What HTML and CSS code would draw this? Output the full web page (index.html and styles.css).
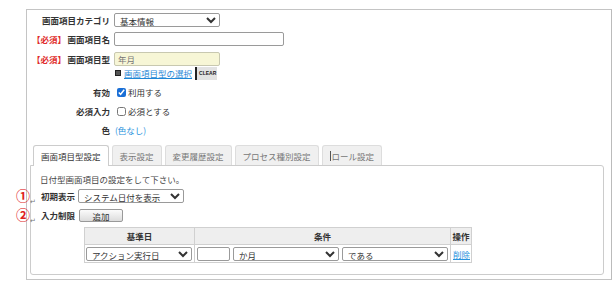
FILE: index.html
```html
<!DOCTYPE html>
<html lang="ja">
<head>
  <meta charset="UTF-8" />
  <title>画面項目設定</title>
  <link rel="stylesheet" href="styles.css">
</head>
<body>

<div class="frame">
  <div class="row r1">
    <span class="lbl">画面項目カテゴリ</span>
    <select class="sel w106"><option>基本情報</option></select>
  </div>
  <div class="row r2">
    <span class="lbl"><em class="req">【必須】</em>画面項目名</span>
    <input type="text" class="txt w170">
  </div>
  <div class="row r3">
    <span class="lbl"><em class="req">【必須】</em>画面項目型</span>
    <input type="text" class="txt ro w106" value="年月" readonly>
  </div>
  <div class="row r4">
    <span class="lbl"></span>
    <span class="pick"><span class="bullet"></span><a href="#" class="link">画面項目型の選択</a><span class="clear">CLEAR</span></span>
  </div>
  <div class="row r5">
    <span class="lbl">有効</span>
    <label class="chk"><input type="checkbox" checked>利用する</label>
  </div>
  <div class="row r6">
    <span class="lbl">必須入力</span>
    <label class="chk"><input type="checkbox">必須とする</label>
  </div>
  <div class="row r7">
    <span class="lbl">色</span>
    <a href="#" class="color-link">(色なし)</a>
  </div>

  <div class="tabs">
    <span class="tab active">画面項目型設定</span>
    <span class="tab">表示設定</span>
    <span class="tab">変更履歴設定</span>
    <span class="tab">プロセス種別設定</span>
    <span class="tab"><span class="caret"></span>ロール設定</span>
  </div>

  <div class="panel">
    <p class="hint">日付型画面項目の設定をして下さい。</p>
    <div class="prow p1">
      <span class="mark">①<i>↵</i></span>
      <span class="plbl">初期表示</span>
      <select class="sel w106"><option>システム日付を表示</option></select>
    </div>
    <div class="prow p2">
      <span class="mark">②<i>↵</i></span>
      <span class="plbl">入力制限</span>
      <button class="add-btn">追加</button>
    </div>

    <table class="cond">
      <colgroup>
        <col class="c1">
        <col class="c2">
        <col class="c3">
      </colgroup>
      <tr>
        <th>基準日</th>
        <th>条件</th>
        <th>操作</th>
      </tr>
      <tr>
        <td><select class="sel w106"><option>アクション実行日</option></select></td>
        <td>
          <div class="cell-flex">
            <input type="text" class="txt w32">
            <select class="sel w106"><option>か月</option></select>
            <select class="sel w106"><option>である</option></select>
          </div>
        </td>
        <td class="op"><a href="#" class="link-del">削除</a></td>
      </tr>
    </table>
  </div>
</div>

</body>
</html>
```

FILE: styles.css
```css
body {
  margin: 0;
  font-family: "Noto Sans CJK JP", "Noto Sans", sans-serif;
  font-size: 8.5px;
  color: #333;
  background-color: #fff;
}
.frame {
  margin: 9px 0 0 26px;
  width: 584px;
  border: 1px solid #c4c4c4;
  border-right-color: #bbb;
  padding-top: 3px;
}
.row {
  display: grid;
  grid-template-columns: 83px 1fr;
  column-gap: 4px;
  align-items: center;
  height: 14px;
}
.r1 { margin-bottom: 5px; }
.r2 { margin-bottom: 6px; }
.r3 { margin-bottom: 0; }
.r4 { margin-bottom: 5px; }
.r5 { margin-bottom: 5px; }
.r6 { margin-bottom: 5px; }
.r7 { margin-bottom: 8px; }
.lbl {
  display: flex;
  justify-content: flex-end;
  font-weight: bold;
  white-space: nowrap;
}
.req {
  font-style: normal;
  color: #e02b2b;
  margin-right: auto;
  padding-left: 5px;
}
.sel {
  height: 14px;
  font-family: inherit;
  font-size: 8.5px;
  color: #333;
  border: 1px solid #9a9a9a;
  border-radius: 2px;
  padding: 0 1px;
  background-color: #fff;
  margin: 0;
}
.w106 { width: 106px; }
.w170 { width: 170px; }
.w32 { width: 33px; }
.txt {
  height: 14px;
  box-sizing: border-box;
  font-family: inherit;
  font-size: 8.5px;
  color: #333;
  border: 1px solid #9a9a9a;
  border-radius: 2px;
  padding: 0 3px;
  margin: 0;
}
.txt.ro {
  background-color: #f7f6d6;
  border-color: #c8c8b0;
  color: #777;
}
.pick {
  display: flex;
  align-items: center;
}
.bullet {
  width: 4px;
  height: 4px;
  border: 1px solid #222;
  background-color: #555;
  margin: 0 3px 0 1px;
}
.link {
  color: #1f87d6;
  text-decoration: underline;
}
.clear {
  margin-left: 3px;
  height: 13px;
  padding: 0 1px 0 2px;
  font-family: "Liberation Sans", sans-serif;
  font-size: 5px;
  font-weight: bold;
  line-height: 13px;
  color: #222;
  background-color: #e2e2e2;
  border-left: 2px solid #222;
}
.chk {
  display: flex;
  align-items: center;
}
.chk input {
  width: 9px;
  height: 9px;
  margin: 0 2px 0 3px;
  accent-color: #1a6fd6;
}
.color-link {
  color: #2a93dd;
  text-decoration: none;
  padding-left: 1px;
}
.tabs {
  display: flex;
  gap: 3px;
  margin-left: 6px;
  height: 20px;
}
.tab {
  display: flex;
  align-items: center;
  padding: 0 7px;
  color: #777;
  background-color: #f0f0f0;
  border: 1px solid #ddd;
  border-bottom: none;
  border-radius: 3px 3px 0 0;
  box-sizing: border-box;
  height: 20px;
}
.tab.active {
  color: #333;
  background-color: #fff;
  border-color: #ccc;
  height: 21px;
  position: relative;
  z-index: 1;
}
.caret {
  width: 1px;
  height: 10px;
  background-color: #555;
  margin-right: 1px;
}
.panel {
  margin: 0 7px 4px 3px;
  height: 110px;
  box-sizing: border-box;
  border: 1px solid #ccc;
  border-radius: 0 3px 3px 3px;
  padding: 6px 9px 0;
}
.hint {
  margin: 0 0 3px;
  height: 14px;
  line-height: 14px;
  color: #444;
}
.prow {
  position: relative;
  display: flex;
  align-items: center;
  height: 14px;
}
.p1 { margin-bottom: 5px; }
.p2 { margin-bottom: 5px; }
.plbl {
  font-weight: bold;
  margin: 0 3px 0 1px;
  white-space: nowrap;
}
.mark {
  position: absolute;
  left: -24px;
  top: -1px;
  font-size: 14px;
  font-weight: bold;
  line-height: 14px;
  color: #e01f1f;
  white-space: nowrap;
}
.mark i {
  font-style: normal;
  font-weight: normal;
  font-size: 7px;
  color: #777;
  margin-left: 0;
  vertical-align: -3px;
}
.add-btn {
  width: 44px;
  height: 13px;
  padding: 0;
  font-family: inherit;
  font-size: 8.5px;
  color: #333;
  border: 1px solid #999;
  border-radius: 2px;
  background: linear-gradient(#fbfbfb, #dcdcdc);
  margin-left: 1px;
}
.cond {
  margin-left: 44px;
  border-collapse: collapse;
  table-layout: fixed;
  width: 387px;
}
.c1 { width: 110px; }
.c2 { width: 256px; }
.c3 { width: 21px; }
.cond th, .cond td {
  border: 1px solid #d0d0d0;
  padding: 0 1px;
  white-space: nowrap;
}
.cond th {
  height: 16px;
  background-color: #eee;
  font-weight: bold;
  text-align: center;
}
.cond td {
  height: 17px;
}
.cond td.op {
  padding: 0 2px;
}
.cell-flex {
  display: flex;
  align-items: center;
  gap: 3px;
  padding-left: 1px;
}
.link-del {
  color: #2a93dd;
  text-decoration: underline;
}
```
